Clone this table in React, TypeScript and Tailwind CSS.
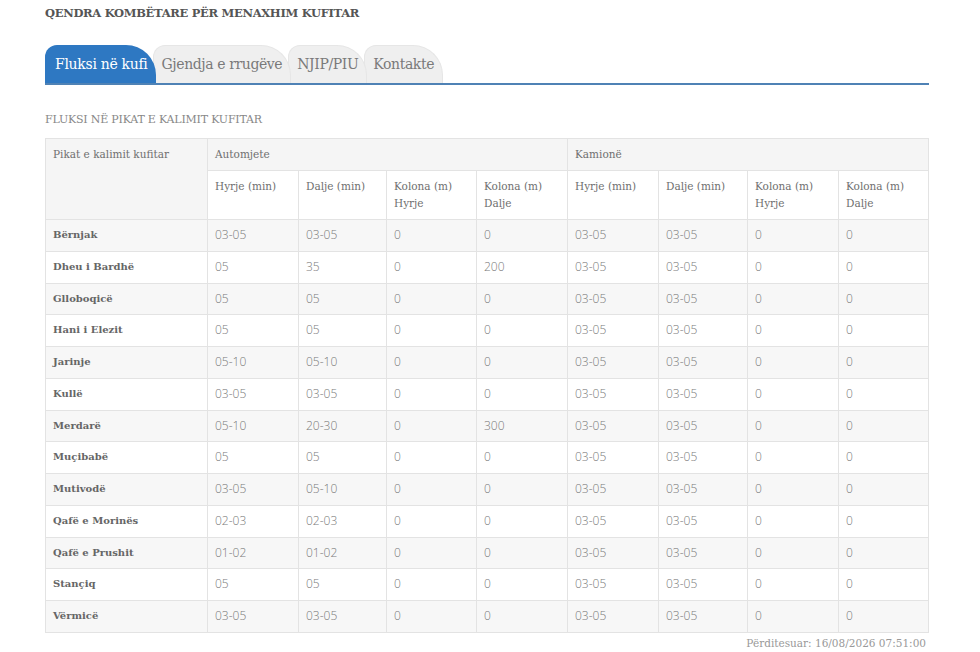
import React from "react";

type Row = {
  name: string;
  values: string[];
};

const rows: Row[] = [
  { name: "Bërnjak", values: ["03-05", "03-05", "0", "0", "03-05", "03-05", "0", "0"] },
  { name: "Dheu i Bardhë", values: ["05", "35", "0", "200", "03-05", "03-05", "0", "0"] },
  { name: "Glloboqicë", values: ["05", "05", "0", "0", "03-05", "03-05", "0", "0"] },
  { name: "Hani i Elezit", values: ["05", "05", "0", "0", "03-05", "03-05", "0", "0"] },
  { name: "Jarinje", values: ["05-10", "05-10", "0", "0", "03-05", "03-05", "0", "0"] },
  { name: "Kullë", values: ["03-05", "03-05", "0", "0", "03-05", "03-05", "0", "0"] },
  { name: "Merdarë", values: ["05-10", "20-30", "0", "300", "03-05", "03-05", "0", "0"] },
  { name: "Muçibabë", values: ["05", "05", "0", "0", "03-05", "03-05", "0", "0"] },
  { name: "Mutivodë", values: ["03-05", "05-10", "0", "0", "03-05", "03-05", "0", "0"] },
  { name: "Qafë e Morinës", values: ["02-03", "02-03", "0", "0", "03-05", "03-05", "0", "0"] },
  { name: "Qafë e Prushit", values: ["01-02", "01-02", "0", "0", "03-05", "03-05", "0", "0"] },
  { name: "Stançiq", values: ["05", "05", "0", "0", "03-05", "03-05", "0", "0"] },
  { name: "Vërmicë", values: ["03-05", "03-05", "0", "0", "03-05", "03-05", "0", "0"] },
];

const subHeads = [
  ["Hyrje (min)"],
  ["Dalje (min)"],
  ["Kolona (m)", "Hyrje"],
  ["Kolona (m)", "Dalje"],
  ["Hyrje (min)"],
  ["Dalje (min)"],
  ["Kolona (m)", "Hyrje"],
  ["Kolona (m)", "Dalje"],
];

const tabs = ["Fluksi në kufi", "Gjendja e rrugëve", "NJIP/PIU", "Kontakte"];

const slab = "font-['DejaVu_Serif','Liberation_Serif',serif]";
const cell = "border border-[#e3e3e3] px-[7px] py-[7px] align-top text-left";

export default function App() {
  return (
    <div className={`w-[980px] h-[652px] bg-white ${slab} overflow-hidden`}>
      <div className="ml-[45px] w-[884px]">
        <h1 className="pt-[5px] text-[11.5px] font-bold tracking-[-0.3px] text-[#555] leading-[16px]">
          QENDRA KOMBËTARE PËR MENAXHIM KUFITAR
        </h1>

        <div className="mt-[24px] flex items-end border-b-2 border-[#4f82b5] h-[40px]">
          {tabs.map((t, i) => (
            <div
              key={t}
              className={
                i === 0
                  ? "relative h-[38px] pl-[10px] pr-[8px] flex items-center rounded-tl-[12px] rounded-tr-[30px] bg-[#2e78c2] text-white text-[14px] tracking-[-0.3px]"
                  : "relative h-[38px] -ml-[3px] pl-[8px] pr-[8px] flex items-center rounded-tl-[12px] rounded-tr-[30px] bg-[#efefef] text-[#7a7a7a] text-[14px] tracking-[-0.4px] border border-b-0 border-[#e6e6e6]"
              }
              style={{ zIndex: 10 - i }}
            >
              {t}
            </div>
          ))}
        </div>

        <h2 className="mt-[28px] text-[11px] uppercase text-[#888] leading-[14px] tracking-[-0.2px]">
          Fluksi në pikat e kalimit kufitar
        </h2>

        <table className="mt-[11px] w-[883px] border-collapse table-fixed text-[10.5px] leading-[17px]">
          <colgroup>
            <col className="w-[162px]" />
            <col className="w-[91px]" />
            <col className="w-[88px]" />
            <col className="w-[90px]" />
            <col className="w-[91px]" />
            <col className="w-[91px]" />
            <col className="w-[89px]" />
            <col className="w-[91px]" />
            <col className="w-[90px]" />
          </colgroup>
          <thead className="text-[#6f6f6f]">
            <tr className="bg-[#f5f5f5]">
              <th rowSpan={2} className={`${cell} font-normal`}>
                Pikat e kalimit kufitar
              </th>
              <th colSpan={4} className={`${cell} font-normal`}>
                Automjete
              </th>
              <th colSpan={4} className={`${cell} font-normal`}>
                Kamionë
              </th>
            </tr>
            <tr className="bg-white">
              {subHeads.map((h, i) => (
                <th key={i} className={`${cell} font-normal`}>
                  {h.map((l, j) => (
                    <div key={j}>{l}</div>
                  ))}
                </th>
              ))}
            </tr>
          </thead>
          <tbody>
            {rows.map((r, i) => (
              <tr key={r.name} className={i % 2 === 0 ? "bg-[#f7f7f7]" : "bg-white"}>
                <td className={`${cell} text-[10px] leading-[16.77px] font-bold text-[#666]`}>{r.name}</td>
                {r.values.map((v, j) => (
                  <td
                    key={j}
                    className={`${cell} font-['Open_Sans',sans-serif] text-[12px] leading-[16.77px] font-light text-[#7a7a7a]`}
                  >
                    {v}
                  </td>
                ))}
              </tr>
            ))}
          </tbody>
        </table>

        <div className="mt-[3px] pr-[3px] text-right text-[10.5px] leading-[14px] text-[#999]">
          Përditesuar: 16/08/2026 07:51:00
        </div>
      </div>
    </div>
  );
}
